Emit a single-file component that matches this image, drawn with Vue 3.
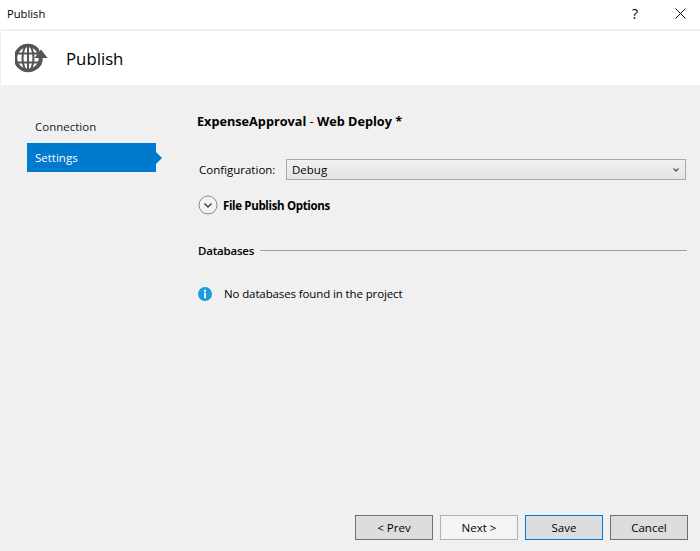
<template>
  <div class="win">
    <div class="titlebar">
      <span class="titlebar__text">Publish</span>
      <span class="titlebar__help">?</span>
      <svg class="titlebar__close" width="11" height="11" viewBox="0 0 11 11">
        <path d="M0.5 0.5L10.5 10.5M10.5 0.5L0.5 10.5" stroke="#111" stroke-width="1" fill="none" />
      </svg>
    </div>
    <div class="banner">
      <svg class="banner__icon" width="34" height="30" viewBox="0 0 34 30">
        <circle cx="13" cy="15" r="12.500" fill="none" stroke="#555" stroke-width="3.500" />
        <g fill="none" stroke="#555" stroke-width="2">
          <ellipse cx="13" cy="15" rx="5.500" ry="13" />
          <path d="M13 2V28M1 10.500H25M1 19.500H25" />
        </g>
        <path d="M24 6L34 6V30H20L27 20Z" fill="#fff" />
        <path d="M19 26C24 24 26.500 20 26 14" fill="none" stroke="#555" stroke-width="3.500" />
        <path d="M19.500 15L26 6.500L32.500 15Z" fill="#555" />
      </svg>
      <span class="banner__title">Publish</span>
    </div>
    <div class="body">
      <nav class="nav">
        <div class="nav__item">Connection</div>
        <div class="nav__item nav__item--on">Settings</div>
      </nav>
      <main class="content">
        <h1 class="heading">ExpenseApproval <span class="heading__sep">-</span> Web Deploy *</h1>
        <div class="config">
          <label class="config__label">Configuration:</label>
          <div class="select">
            <span>Debug</span>
            <svg width="6" height="4" viewBox="0 0 6 4">
              <path d="M0.500 0.500L3 3L5.500 0.500" stroke="#555" stroke-width="1.300" fill="none" />
            </svg>
          </div>
        </div>
        <div class="options">
          <svg width="20" height="20" viewBox="0 0 20 20">
            <circle cx="10" cy="10" r="9" fill="#f3f3f3" stroke="#8a8a8a" stroke-width="1" />
            <path d="M6.500 8.500L10 12L13.500 8.500" stroke="#444" stroke-width="1.500" fill="none" />
          </svg>
          <span>File Publish Options</span>
        </div>
        <div class="section">
          <span>Databases</span>
          <div class="section__line"></div>
        </div>
        <div class="notice">
          <svg width="14" height="14" viewBox="0 0 15 15">
            <circle cx="7.500" cy="7.500" r="7.500" fill="#1a9ce0" />
            <rect x="6.400" y="6.200" width="2.200" height="5.800" fill="#fff" />
            <rect x="6.400" y="3" width="2.200" height="2.100" fill="#fff" />
          </svg>
          <span>No databases found in the project</span>
        </div>
      </main>
    </div>
    <div class="footer">
      <button class="btn">&lt; Prev</button>
      <button class="btn btn--off">Next &gt;</button>
      <button class="btn btn--default">Save</button>
      <button class="btn">Cancel</button>
    </div>
  </div>
</template>

<script setup>
</script>

<style>
html, body {
  margin: 0;
  background: #f0f0f0;
}
</style>

<style scoped>
.win {
  width: 700px;
  height: 551px;
  display: flex;
  flex-direction: column;
  background: #f0f0f0;
  color: #000;
  font-family: "Open Sans", "Noto Sans", sans-serif;
  font-size: 11.5px;
  overflow: hidden;
}

.titlebar {
  height: 27px;
  flex-shrink: 0;
  display: flex;
  align-items: center;
  background: #fff;
  padding-left: 7px;
  padding-bottom: 2px;
  border-bottom: 2px solid #f0f0f0;
}

.titlebar__text {
  flex: 1;
  font-size: 11.2px;
}

.titlebar__help {
  font-size: 14px;
  margin-right: 37px;
}

.titlebar__close {
  margin-right: 14px;
}

.banner {
  height: 54px;
  flex-shrink: 0;
  display: flex;
  align-items: center;
  background: #fff;
  margin-left: 1px;
  padding-left: 14px;
}

.banner__title {
  margin-left: 17px;
  font-size: 16.800px;
}

.body {
  flex: 1;
  display: flex;
  padding-top: 27px;
}

.nav {
  width: 129px;
  margin-left: 27px;
  flex-shrink: 0;
}

.nav__item {
  position: relative;
  height: 31px;
  line-height: 29px;
  padding-left: 8px;
  color: #222;
}

.nav__item--on {
  height: 29px;
  line-height: 29px;
  background: #007acc;
  color: #fff;
}

.nav__item--on::after {
  content: "";
  position: absolute;
  left: 100%;
  top: 9px;
  border-left: 6px solid #007acc;
  border-top: 6px solid transparent;
  border-bottom: 6px solid transparent;
}

.content {
  margin-left: 41px;
  width: 490px;
}

.heading {
  margin: -1px 0 0;
  height: 20px;
  line-height: 20px;
  font-size: 12.700px;
  font-weight: 700;
}

.heading__sep {
  font-weight: 400;
}

.config {
  display: flex;
  align-items: center;
  margin: 28px 1px 0 2px;
}

.config__label {
  width: 87px;
  flex-shrink: 0;
}

.select {
  flex: 1;
  height: 19px;
  display: flex;
  align-items: center;
  justify-content: space-between;
  padding: 0 6px 0 5px;
  border: 1px solid #a9a9a9;
  background: linear-gradient(#f0f0f0, #e4e4e4);
}

.options {
  display: flex;
  align-items: center;
  gap: 5px;
  margin-top: 15px;
  margin-left: 2px;
  font-weight: 700;
  letter-spacing: -0.350px;
}

.options svg {
  margin-left: -1px;
}

.section {
  display: flex;
  align-items: center;
  gap: 6px;
  margin-top: 28px;
  margin-left: 1px;
  font-weight: 600;
  letter-spacing: -0.200px;
}

.section__line {
  flex: 1;
  height: 1px;
  background: #a0a0a0;
}

.notice {
  display: flex;
  align-items: center;
  gap: 12px;
  margin-top: 28px;
  margin-left: 1px;
  letter-spacing: -0.120px;
}

.footer {
  height: 36px;
  flex-shrink: 0;
  display: flex;
  justify-content: flex-end;
  gap: 7px;
  padding-right: 12px;
}

.btn {
  width: 78px;
  height: 25px;
  padding: 0;
  border: 1px solid #707070;
  background: #ddd;
  color: #000;
  font-family: inherit;
  font-size: 11.5px;
}

.btn--off {
  background: #f4f4f4;
  border-color: #adb2b5;
}

.btn--default {
  border-color: #0078d7;
}
</style>
